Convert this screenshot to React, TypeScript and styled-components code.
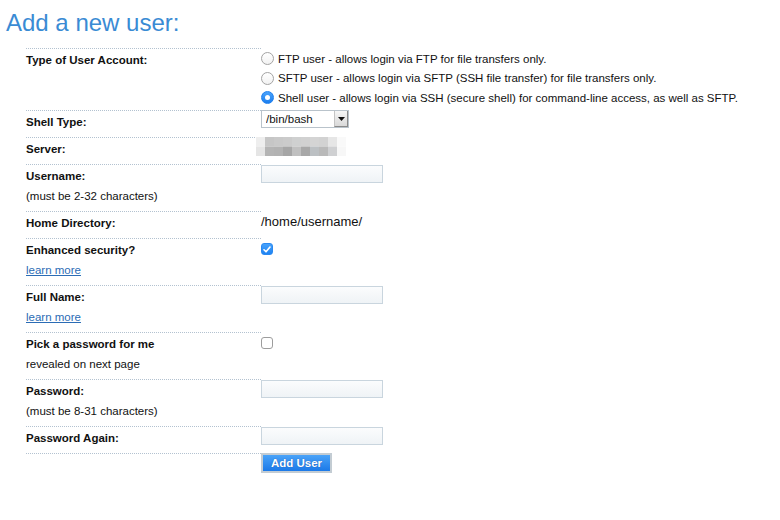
import styled, { createGlobalStyle } from 'styled-components';

const GlobalStyle = createGlobalStyle`
  body {
    margin: 0;
    background: #fff;
    font-family: "Liberation Sans", Arial, Helvetica, sans-serif;
    color: #111;
  }
`;

const Page = styled.div`
  padding: 9px 0 0 6px;
`;

const Title = styled.h1`
  margin: 0 0 11px;
  font-size: 24px;
  line-height: 28px;
  font-weight: normal;
  color: #3a8bd4;
`;

const Form = styled.div`
  margin-left: 20px;
  display: flex;
  flex-direction: column;
`;

const Row = styled.div`
  display: flex;
  align-items: stretch;
`;

const Label = styled.div`
  width: 235px;
  flex-shrink: 0;
  border-top: 1px dotted #b3c2d0;
  padding: 4px 0 8px;
  font-size: 11.5px;
  line-height: 14px;
`;

const LabelTitle = styled.div`
  font-weight: bold;
`;

const Hint = styled.div`
  margin-top: 6px;
`;

const LearnMore = styled.a`
  display: block;
  margin-top: 6px;
  color: #2b6cb5;
  text-decoration: underline;
`;

const Value = styled.div<{ $pad?: number }>`
  flex: 1;
  padding-top: ${(p) => p.$pad ?? 0}px;
  font-size: 11.5px;
`;

const RadioList = styled.div`
  padding: 1px 0 2.5px;
`;

const RadioLine = styled.label`
  display: flex;
  align-items: center;
  gap: 4px;
  height: 19.5px;
  font-size: 11.5px;
`;

const Radio = styled.span<{ $on?: boolean }>`
  width: 13px;
  height: 13px;
  box-sizing: border-box;
  border-radius: 50%;
  flex-shrink: 0;
  display: flex;
  align-items: center;
  justify-content: center;
  border: 1px solid ${(p) => (p.$on ? '#1f80ee' : '#a3a3a3')};
  background: ${(p) => (p.$on ? 'linear-gradient(#4aa3fb, #1b7eef)' : 'linear-gradient(#fff, #f2f2f2)')};

  &::after {
    content: '';
    width: 5px;
    height: 5px;
    border-radius: 50%;
    background: #fff;
    display: ${(p) => (p.$on ? 'block' : 'none')};
  }
`;

const SelectBox = styled.div`
  position: relative;
  width: 88px;
  height: 18px;
  box-sizing: border-box;
  border: 1px solid #b9c3cb;
  background: #fff;
`;

const Select = styled.select`
  appearance: none;
  border: none;
  outline: none;
  background: transparent;
  width: 100%;
  height: 16px;
  padding: 0 0 0 4px;
  font-family: "Liberation Sans", Arial, sans-serif;
  font-size: 11.5px;
  color: #111;
`;

const Arrow = styled.span`
  position: absolute;
  right: 0;
  top: 0;
  width: 14px;
  height: 16px;
  box-sizing: border-box;
  border-left: 1px solid #c4c4c4;
  border-right: 1px solid #8a8a8a;
  border-bottom: 1px solid #8a8a8a;
  background: linear-gradient(#f6f6f6, #d9d9d9);
  display: flex;
  align-items: center;
  justify-content: center;
  pointer-events: none;
`;

const TextInput = styled.input`
  display: block;
  margin: 1px 0 0;
  width: 122px;
  height: 18px;
  box-sizing: border-box;
  border: 1px solid #c9d5de;
  background: linear-gradient(#fbfcfd, #eff3f6);
  padding: 0 3px;
  font-size: 11.5px;
`;

const PathText = styled.div`
  font-size: 13px;
  line-height: 16px;
`;

const Check = styled.span<{ $on?: boolean }>`
  display: flex;
  align-items: center;
  justify-content: center;
  width: 12px;
  height: 12px;
  box-sizing: border-box;
  border-radius: 3px;
  border: 1px solid ${(p) => (p.$on ? '#2a89f1' : '#9d9d9d')};
  background: ${(p) => (p.$on ? 'linear-gradient(#47a2fb, #1f83f2)' : '#fff')};
`;

const SubmitButton = styled.button`
  width: 71px;
  height: 20px;
  box-sizing: border-box;
  border: 2px solid #c3ccd3;
  padding: 0;
  background: linear-gradient(#4aa3f8, #1b79e8);
  color: #fff;
  font-family: "Liberation Sans", Arial, sans-serif;
  font-weight: bold;
  font-size: 11.5px;
  text-shadow: 0 0 1px rgba(0, 40, 120, 0.6);
  cursor: pointer;
`;

const mosaic = [
  ['#eeeeee', '#c6c6c6', '#c9c9c9', '#cbcbcb', '#cfd0d0', '#d1d1d1', '#d4d4d4', '#d2d2d2', '#e6e6e6', '#f9f9f9'],
  ['#e5e5e5', '#b4b4b4', '#b2b2b2', '#a6a6a6', '#c0c0c0', '#a8a8a8', '#bcc0c3', '#b9b9b9', '#cfd0d2', '#f7f7f7'],
];

const ServerBlur = () => (
  <svg width="90" height="19" viewBox="0 0 90 19" style={{ display: 'block', marginLeft: -5 }}>
    {mosaic.map((row, r) =>
      row.map((c, i) => <rect key={`${r}-${i}`} x={i * 9} y={r * 9.5} width="9" height="9.5" fill={c} />)
    )}
  </svg>
);

const radios = [
  { text: 'FTP user - allows login via FTP for file transfers only.', on: false },
  { text: 'SFTP user - allows login via SFTP (SSH file transfer) for file transfers only.', on: false },
  { text: 'Shell user - allows login via SSH (secure shell) for command-line access, as well as SFTP.', on: true },
];

export default function App() {
  return (
    <Page>
      <GlobalStyle />
      <Title>Add a new user:</Title>
      <Form>
        <Row>
          <Label>
            <LabelTitle>Type of User Account:</LabelTitle>
          </Label>
          <Value>
            <RadioList>
              {radios.map((r) => (
                <RadioLine key={r.text}>
                  <Radio $on={r.on} />
                  {r.text}
                </RadioLine>
              ))}
            </RadioList>
          </Value>
        </Row>
        <Row>
          <Label>
            <LabelTitle>Shell Type:</LabelTitle>
          </Label>
          <Value>
            <SelectBox>
              <Select defaultValue="/bin/bash">
                <option>/bin/bash</option>
                <option>/bin/zsh</option>
                <option>/bin/sh</option>
              </Select>
              <Arrow>
                <svg width="7" height="4" viewBox="0 0 7 4">
                  <path d="M0 0h7L3.5 4z" fill="#111" />
                </svg>
              </Arrow>
            </SelectBox>
          </Value>
        </Row>
        <Row>
          <Label>
            <LabelTitle>Server:</LabelTitle>
          </Label>
          <Value>
            <ServerBlur />
          </Value>
        </Row>
        <Row>
          <Label>
            <LabelTitle>Username:</LabelTitle>
            <Hint>(must be 2-32 characters)</Hint>
          </Label>
          <Value>
            <TextInput type="text" />
          </Value>
        </Row>
        <Row>
          <Label>
            <LabelTitle>Home Directory:</LabelTitle>
          </Label>
          <Value $pad={3}>
            <PathText>/home/username/</PathText>
          </Value>
        </Row>
        <Row>
          <Label>
            <LabelTitle>Enhanced security?</LabelTitle>
            <LearnMore href="#">learn more</LearnMore>
          </Label>
          <Value $pad={5}>
            <Check $on>
              <svg width="8" height="7" viewBox="0 0 8 7">
                <path d="M1 3.8l2 2L7 1" fill="none" stroke="#fff" strokeWidth="1.6" strokeLinecap="round" strokeLinejoin="round" />
              </svg>
            </Check>
          </Value>
        </Row>
        <Row>
          <Label>
            <LabelTitle>Full Name:</LabelTitle>
            <LearnMore href="#">learn more</LearnMore>
          </Label>
          <Value>
            <TextInput type="text" />
          </Value>
        </Row>
        <Row>
          <Label>
            <LabelTitle>Pick a password for me</LabelTitle>
            <Hint>revealed on next page</Hint>
          </Label>
          <Value $pad={5}>
            <Check />
          </Value>
        </Row>
        <Row>
          <Label>
            <LabelTitle>Password:</LabelTitle>
            <Hint>(must be 8-31 characters)</Hint>
          </Label>
          <Value>
            <TextInput type="password" />
          </Value>
        </Row>
        <Row>
          <Label>
            <LabelTitle>Password Again:</LabelTitle>
          </Label>
          <Value>
            <TextInput type="password" />
          </Value>
        </Row>
        <Row>
          <Label />
          <Value>
            <SubmitButton>Add User</SubmitButton>
          </Value>
        </Row>
      </Form>
    </Page>
  );
}
